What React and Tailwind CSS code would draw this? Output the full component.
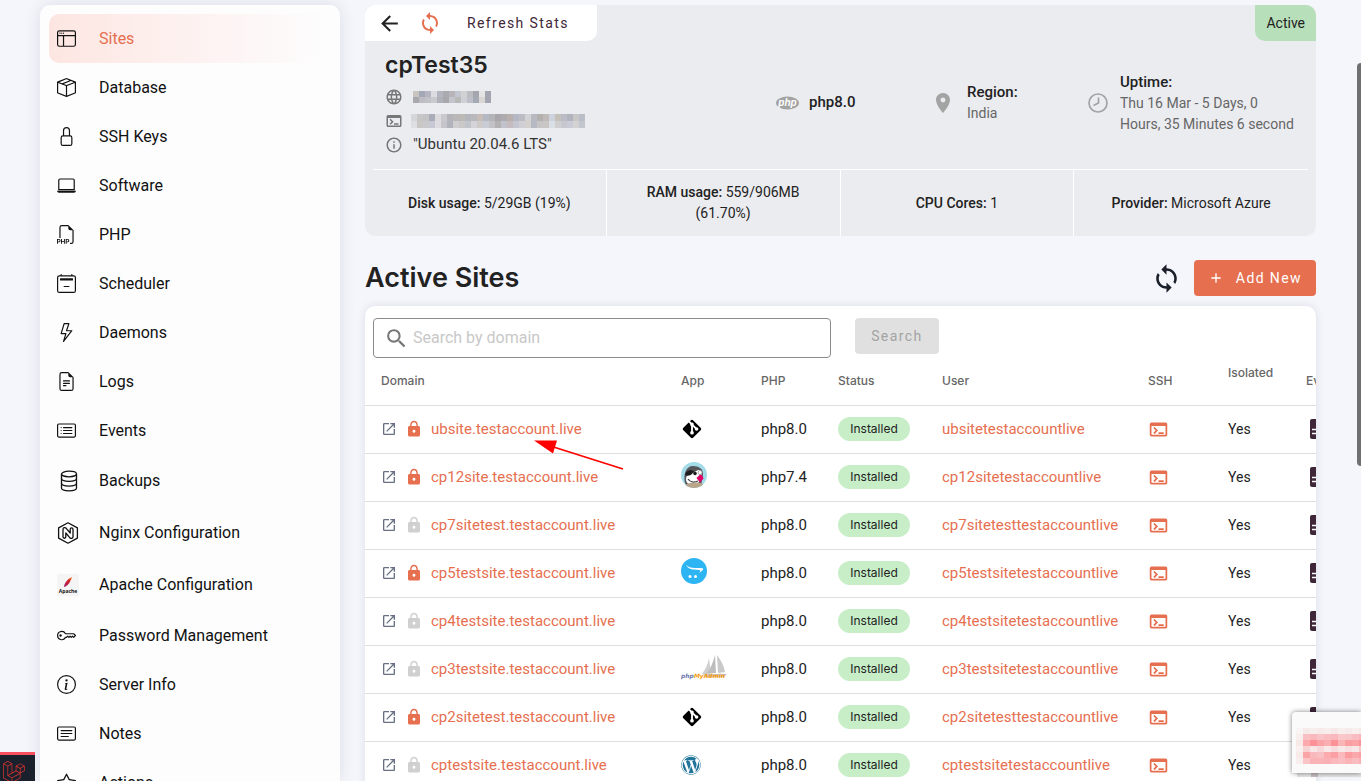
import React, { useState } from "react";
import {
  BsWindowSidebar,
  BsBoxSeam,
  BsLock,
  BsLaptop,
  BsFiletypePhp,
  BsCalendar2Minus,
  BsLightning,
  BsFileEarmarkText,
  BsCardList,
  BsKey,
  BsInfoCircle,
  BsCardText,
  BsStar,
} from "react-icons/bs";
import {
  MdArrowBack,
  MdSync,
  MdLanguage,
  MdOutlineTerminal,
  MdOutlineInfo,
  MdLocationOn,
  MdSearch,
  MdAdd,
  MdOpenInNew,
  MdLock,
} from "react-icons/md";
import { FaWordpress, FaLaravel } from "react-icons/fa";

const BackupIcon = () => (
  <svg width="22" height="22" viewBox="0 0 22 22" fill="none" stroke="currentColor" strokeWidth="1.3">
    <ellipse cx="12" cy="4" rx="7.5" ry="2.800" />
    <path d="M4.500 4v14c0 1.600 3.300 2.800 7.500 2.800s7.500-1.200 7.500-2.800V4" />
    <path d="M4.500 8.500c0 1.600 3.300 2.800 7.500 2.800s7.500-1.200 7.500-2.800M4.500 13.300c0 1.600 3.300 2.800 7.500 2.800s7.500-1.200 7.500-2.800" />
  </svg>
);

const NginxIcon = () => (
  <svg width="22" height="22" viewBox="0 0 22 22" fill="none" stroke="currentColor" strokeWidth="1.3" strokeLinejoin="round">
    <path d="M11 .8l9.400 5.100v10.200L11 21.200l-9.400-5.100V5.900z" />
    <path d="M6 14.800V7.300c0-1.700 2.100-2.200 3.200-1l4 4.700V7.200c0-1.900 2.800-1.900 2.800 0v7.500c0 1.700-2.100 2.200-3.200 1L8.800 11v3.800c0 1.900-2.800 1.900-2.800 0z" />
  </svg>
);

const ApacheIcon = () => (
  <svg width="22" height="22" viewBox="0 0 22 22">
    <defs>
      <linearGradient id="feather" x1="1" y1="0" x2="0" y2="1">
        <stop offset="0" stopColor="#f08a24" />
        <stop offset="0.4" stopColor="#d2232f" />
        <stop offset="1" stopColor="#9b1f6b" />
      </linearGradient>
    </defs>
    <rect width="22" height="22" fill="#f5f5f5" />
    <path d="M15 3c-4 1.500-7 5-8 9.500l.5.500c4-1.500 6-5.500 7.500-10z" fill="url(#feather)" />
    <text x="11" y="18.500" textAnchor="middle" fontSize="5" fontWeight="700" fontFamily="Open Sans, sans-serif" fill="#111">
      Apache
    </text>
  </svg>
);

const ClockIcon = () => (
  <svg width="20" height="20" viewBox="0 0 20 20" fill="none" stroke="currentColor" strokeWidth="1.700">
    <circle cx="10" cy="10" r="9" />
    <path d="M10.500 4.500V10l-5 2.500" />
  </svg>
);

const PhpIcon = () => (
  <svg width="26" height="14" viewBox="0 0 26 14">
    <ellipse cx="12.500" cy="7" rx="11.500" ry="6.500" fill="#a3a3a3" />
    <text x="12.500" y="9.500" textAnchor="middle" fontSize="10" fontStyle="italic" fontWeight="700" fontFamily="Liberation Sans, sans-serif" fill="#fff">
      php
    </text>
  </svg>
);

const EventsIcon = () => (
  <svg width="20" height="20" viewBox="0 0 20 20" className="max-w-none">
    <rect width="18" height="20" rx="2" fill="#3f2638" />
    <path d="M2 10.500h12M2 14.500h9" stroke="#fff" strokeWidth="1.500" />
  </svg>
);

const GitIcon = () => (
  <svg width="22" height="22" viewBox="0 0 24 24" fill="#000">
    <path d="M2.600 10.590L8.380 4.800l1.690 1.700c-.24.85.15 1.780.93 2.230v5.540c-.6.34-1 .99-1 1.730a2 2 0 0 0 2 2a2 2 0 0 0 2-2c0-.74-.4-1.390-1-1.730V9.410l2.070 2.090c-.07.15-.07.32-.07.5a2 2 0 0 0 2 2a2 2 0 0 0 2-2a2 2 0 0 0-2-2c-.18 0-.35 0-.5.07L13.930 7.500a1.980 1.980 0 0 0-1.150-2.340c-.43-.16-.88-.2-1.280-.09L9.800 3.380l.79-.78c.78-.79 2.040-.79 2.820 0l7.990 7.990c.79.78.79 2.040 0 2.820l-7.990 7.990c-.78.79-2.040.79-2.820 0L2.600 13.410c-.79-.78-.79-2.040 0-2.820Z" />
  </svg>
);

const PrestashopIcon = () => (
  <svg width="26" height="26" viewBox="0 0 26 26" className="mb-1">
    <defs>
      <clipPath id="presta">
        <circle cx="13" cy="13" r="13" />
      </clipPath>
    </defs>
    <g clipPath="url(#presta)">
      <rect width="26" height="26" fill="#a4dbe8" />
      <path d="M4 21C2 12 5 4 12 4c6 0 10 3 10 8l-2 12H6z" fill="#55555a" />
      <path d="M5 17c0-3 3-6 7-6l5-3c2-.5 4 .5 4 3l-3 9c-2 2-4 3-6 3-4 0-7-2-7-6z" fill="#fff" />
      <path d="M4 13c2 1 5 1 7-1l2-3-4-1-4 2z" fill="#1d1d20" />
      <circle cx="14" cy="11.500" r="1.800" fill="#1d1d20" />
      <circle cx="19" cy="10.500" r="2" fill="#fff" stroke="#888" strokeWidth=".7" />
      <path d="M15.500 16l3.500-3.500c2 .5 3 2 3.500 4l-3.500 4z" fill="#df0067" />
      <path d="M7 17c2 3 6 4 10 2" stroke="#444" strokeWidth="1.300" fill="none" />
      <path d="M4 23c5-3 13-3 18-1v4H4z" fill="#b9a58c" />
    </g>
  </svg>
);

const OpencartIcon = () => (
  <svg width="26" height="26" viewBox="0 0 26 26" className="mb-1">
    <circle cx="13" cy="13" r="13" fill="#2cb4f3" />
    <path d="M5 6.500c2 2.800 5 3.500 9 3.500 4.500 0 8.500-.2 8.200 1.200-.3 1-2.200 2.300-4.200 3.800 1-1.500 2-2.500.500-3C16.500 11.500 7 13 5 6.500z" fill="#fff" />
    <circle cx="9" cy="18.500" r="1.500" fill="#fff" />
    <circle cx="14.500" cy="18.500" r="1.500" fill="#fff" />
  </svg>
);

const PhpMyAdminIcon = () => (
  <svg width="46" height="26" viewBox="0 0 46 26" className="mb-1 overflow-visible">
    <path d="M21 20C25 15 27 9 28 4l2 16z" fill="#cfcfcf" />
    <path d="M26 19c4-5 6-11 8-18l1 18z" fill="#bdbdbd" />
    <path d="M36 1c4 5 7 11 8 17l-7 1z" fill="#c9c9c9" />
    <path d="M22 20h24l-3 3H25z" fill="#c4c4c4" />
    <text x="0" y="24" fontSize="6" fontStyle="italic" fontWeight="700" fontFamily="DejaVu Sans, sans-serif" fill="#6c78af">
      php<tspan fill="#f89c0e">MyAdmin</tspan>
    </text>
  </svg>
);

const apps = {
  git: <GitIcon />,
  prestashop: <PrestashopIcon />,
  opencart: <OpencartIcon />,
  phpmyadmin: <PhpMyAdminIcon />,
  wordpress: <FaWordpress size={20} className="text-[#21759b]" />,
};

const navItems = [
  { label: "Sites", icon: <BsWindowSidebar size={19} />, active: true },
  { label: "Database", icon: <BsBoxSeam size={19} /> },
  { label: "SSH Keys", icon: <BsLock size={19} /> },
  { label: "Software", icon: <BsLaptop size={19} /> },
  { label: "PHP", icon: <BsFiletypePhp size={19} /> },
  { label: "Scheduler", icon: <BsCalendar2Minus size={19} /> },
  { label: "Daemons", icon: <BsLightning size={19} /> },
  { label: "Logs", icon: <BsFileEarmarkText size={19} /> },
  { label: "Events", icon: <BsCardList size={19} /> },
  { label: "Backups", icon: <BackupIcon />, tall: true },
  { label: "Nginx Configuration", icon: <NginxIcon />, tall: true },
  { label: "Apache Configuration", icon: <ApacheIcon />, tall: true },
  { label: "Password Management", icon: <BsKey size={19} /> },
  { label: "Server Info", icon: <BsInfoCircle size={19} /> },
  { label: "Notes", icon: <BsCardText size={19} /> },
  { label: "Actions", icon: <BsStar size={19} /> },
];

const sites = [
  { domain: "ubsite.testaccount.live", ssl: true, app: "git", php: "php8.0", user: "ubsitetestaccountlive" },
  { domain: "cp12site.testaccount.live", ssl: true, app: "prestashop", php: "php7.4", user: "cp12sitetestaccountlive" },
  { domain: "cp7sitetest.testaccount.live", ssl: false, php: "php8.0", user: "cp7sitetesttestaccountlive" },
  { domain: "cp5testsite.testaccount.live", ssl: true, app: "opencart", php: "php8.0", user: "cp5testsitetestaccountlive" },
  { domain: "cp4testsite.testaccount.live", ssl: false, php: "php8.0", user: "cp4testsitetestaccountlive" },
  { domain: "cp3testsite.testaccount.live", ssl: false, app: "phpmyadmin", php: "php8.0", user: "cp3testsitetestaccountlive" },
  { domain: "cp2sitetest.testaccount.live", ssl: true, app: "git", php: "php8.0", user: "cp2sitetesttestaccountlive" },
  { domain: "cptestsite.testaccount.live", ssl: false, app: "wordpress", php: "php8.0", user: "cptestsitetestaccountlive" },
];

// Masked values, one colour per block
const ipMask = [
  "#c8c4c0 #a3a9b4 #b3b6c0 #dcdce0 #b3b6be #a9abb0 #b7b3b6 #c3c6d0 #d2d2d5 #bcbcc2 #a3a6ae #e4e4e4 #a3a6b0",
  "#a9a9ad #bcbcc2 #c0c2c8 #c9cad0 #b0b2ba #a8a8ac #c4c4cc #b9b9b9 #cfd0d6 #bcbec8 #a6aab4 #d9d6d4 #a3a6b0",
];
const hostMask = [
  "#d6d6d8 #c6c6c6 #c4c4c6 #a9adb8 #dcdadd #c9c9cc #b4b4b8 #b9b7b7 #bcb9b6 #b4b6bc #b9b9bd #c6bdb8 #b4b8c2 #b4b4b8 #a8a6aa #adabae #b9b0ae #b4b8c4 #bcbcc4 #d3d2d4 #b9b9c2 #b4b0ae #bfb9b9 #cdd2dc #c6c0bb #bcbcc6 #b1b4bc #c9c6c8 #b9bec8",
  "#dfdfe1 #c9c7c6 #c9c9cc #c6c9d4 #dedce0 #c4c4ca #b1b4bc #cfcfd2 #cac8c8 #c2c4cc #d4d4d8 #cfcaca #c9ccd4 #c2c2c6 #b4b1b4 #c0c2cc #c4bcbe #c4c6d0 #cfcfd4 #d4d0ce #b6b8c4 #c6c4c4 #cac6c6 #dadfe6 #cfcfd2 #c6c8d0 #c9ccd6 #d4d2d2 #c2c6ce",
];
const noticeMask = [
  "#f9f5f5 #f6eaea #f8eeee #f6eaea #f8eeee #f6e8e8 #f9eeee #f6eaea #f9efef #f6eaea",
  "#f9eeee #f9c0c4 #f9b9bd #f8c4c8 #f9bcc0 #f9b8bc #fac8ca #f8c6c8 #f9bcc0 #f8b4b8",
  "#f9e8e8 #fba9ad #fc9297 #fba4a8 #fbaeb2 #fc9297 #f9b4b8 #fb9ea2 #fba4a8 #fc9297",
  "#faf0f0 #f9d2d4 #f9e6e6 #f8d8da #f9e9e9 #f8dcde #f9e8e8 #f8e0e0 #f9e8e8 #f9c8ca",
  "#f9eaea #fba4a8 #f9b8bc #f9c0c4 #fbaaae #fa9fa4 #f9b9bd #fb9ca0 #fba8ac #fa9fa4",
  "#f9eeee #f9c4c6 #fab4b8 #fab4b8 #f9b0b4 #fab8bc #f9bcc0 #fab4b8 #f9bcc0 #fab0b4",
];
const footMask = ["#e4e4e5 #e6e6e7 #c6bcc2 #e2e2e4 #e4e4e6 #e2e2e4 #e4e4e6 #e2e2e4 #e4e4e6 #e2e2e4"];

const Mosaic = ({ rows, cell, cellHeight }) => {
  const parsed = rows.map((r) => r.split(" "));
  const h = cellHeight || cell;
  return (
    <svg width={parsed[0].length * cell} height={parsed.length * h} shapeRendering="crispEdges" className="max-w-none" aria-hidden="true">
      {parsed.map((colors, y) =>
        colors.map((fill, x) => (
          <rect key={`${x}-${y}`} x={x * cell} y={y * h} width={cell} height={h} fill={fill} />
        ))
      )}
    </svg>
  );
};

const Sidebar = () => (
  <nav className="w-[300px] shrink-0 rounded-t-[10px] bg-[#fdfdfe] px-[9px] pt-[9px] shadow-[0_0_16px_rgba(40,50,90,0.12)]">
    {navItems.map((item) => (
      <a
        key={item.label}
        href="#"
        className={`flex items-center rounded-[10px] pl-2 text-base ${item.tall ? "h-[52px]" : "h-[49px]"} ${
          item.active
            ? "bg-gradient-to-r from-[#fde6e2] to-transparent text-[#e66f50]"
            : "text-[#111]"
        }`}
      >
        <span className="flex w-[42px] shrink-0 text-[#111]">{item.icon}</span>
        {item.label}
      </a>
    ))}
  </nav>
);

const ServerCard = () => (
  <section className="overflow-hidden rounded-[10px] bg-[#ebecf0]">
    <div className="flex h-9 items-start justify-between">
      <div className="flex h-9 items-center rounded-br-[10px] bg-white pl-3 pr-7">
        <button aria-label="Back" className="text-[#222]">
          <MdArrowBack size={25} />
        </button>
        <button className="ml-4 flex items-center text-sm tracking-widest text-[#3f2638]">
          <MdSync size={24} className="mr-[25px] text-[#e66f50]" />
          Refresh Stats
        </button>
      </div>
      <span className="flex h-9 items-center rounded-bl-[10px] bg-[#b7dfb9] px-[11px] text-sm text-[#222]">Active</span>
    </div>

    <div className="flex h-32 items-center px-5 pb-1 text-sm">
      <div className="h-full flex-1 pt-2">
        <h1 className="font-[Inter,sans-serif] text-[23px] leading-8 font-semibold text-[#222]">cpTest35</h1>
        <ul className="mt-1 text-[#777]">
          <li className="flex h-6 items-center gap-2.5">
            <MdLanguage size={18} />
            <Mosaic rows={ipMask} cell={6} />
          </li>
          <li className="flex h-6 items-center gap-2">
            <MdOutlineTerminal size={18} />
            <Mosaic rows={hostMask} cell={6} cellHeight={7} />
          </li>
          <li className="flex h-6 items-center gap-2.5">
            <MdOutlineInfo size={18} />
            <span className="text-[15px] text-[#333]">"Ubuntu 20.04.6 LTS"</span>
          </li>
        </ul>
      </div>
      <div className="flex w-[156px] items-center gap-2 text-[15px] font-medium text-[#222]">
        <PhpIcon />
        php8.0
      </div>
      <div className="flex w-[157px] items-center gap-3 leading-[21px]">
        <MdLocationOn size={24} className="text-[#a3a3a3]" />
        <div>
          <div className="text-[15px] font-medium text-[#222]">Region:</div>
          <div className="text-[#666]">India</div>
        </div>
      </div>
      <div className="flex items-center gap-3 leading-[21px]">
        <span className="text-[#a3a3a3]">
          <ClockIcon />
        </span>
        <div>
          <div className="text-[15px] font-medium text-[#222]">Uptime:</div>
          <div className="w-[176px] text-[#666]">Thu 16 Mar - 5 Days, 0 Hours, 35 Minutes 6 second</div>
        </div>
      </div>
    </div>

    <div className="mx-2 grid h-[67px] grid-cols-4 divide-x divide-white border-t border-white text-center text-sm leading-[21px] text-[#222]">
      <div className="flex items-center justify-center px-5">
        <p><b className="font-medium">Disk usage:</b> 5/29GB (19%)</p>
      </div>
      <div className="flex items-center justify-center px-8">
        <p><b className="font-medium">RAM usage:</b> 559/906MB (61.70%)</p>
      </div>
      <div className="flex items-center justify-center px-5">
        <p><b className="font-medium">CPU Cores:</b> 1</p>
      </div>
      <div className="flex items-center justify-center px-5">
        <p><b className="font-medium">Provider:</b> Microsoft Azure</p>
      </div>
    </div>
  </section>
);

const SitesTable = () => (
  <table className="w-[1060px] table-fixed text-left text-[15px]">
    <colgroup>
      <col className="w-[300px]" />
      <col className="w-[80px]" />
      <col className="w-[77px]" />
      <col className="w-[104px]" />
      <col className="w-[206px]" />
      <col className="w-[80px]" />
      <col className="w-[80px]" />
      <col />
    </colgroup>
    <thead className="font-[Inter,sans-serif] text-xs text-[#666]">
      <tr className="h-[47px] border-b border-[#dedede]">
        <th className="pl-4 font-medium">Domain</th>
        <th className="pl-4 font-medium">App</th>
        <th className="pl-4 font-medium">PHP</th>
        <th className="pl-4 font-medium">Status</th>
        <th className="pl-4 font-medium">User</th>
        <th className="pl-4 font-medium">SSH</th>
        <th className="pb-4 pl-4 font-medium">Isolated</th>
        <th className="pl-[14px] font-medium">Events</th>
      </tr>
    </thead>
    <tbody>
      {sites.map((site) => (
        <tr key={site.domain} className="h-12 border-b border-[#dedede] text-[#222]">
          <td className="pl-4">
            <div className="flex items-center">
              <a href="#" aria-label={`Open ${site.domain}`} className="text-[#667080]">
                <MdOpenInNew size={16} />
              </a>
              <MdLock size={18} className={site.ssl ? "ml-2 text-[#e66f50]" : "ml-2 text-[#d0d0d0]"} />
              <a href="#" className="ml-2 text-[#e66f50]">{site.domain}</a>
            </div>
          </td>
          <td className="pl-4">{apps[site.app]}</td>
          <td className="pl-4">{site.php}</td>
          <td className="pl-4">
            <span className="flex h-6 w-[72px] items-center justify-center rounded-full bg-[#c8eec8] font-[Inter,sans-serif] text-xs">
              Installed
            </span>
          </td>
          <td className="pl-4">
            <a href="#" className="text-[#e66f50]">{site.user}</a>
          </td>
          <td className="pl-4">
            <button aria-label="Open terminal" className="flex text-[#e66f50]">
              <MdOutlineTerminal size={21} />
            </button>
          </td>
          <td className="pl-4 text-sm">Yes</td>
          <td className="pl-[18px]">
            <button aria-label="Events" className="flex">
              <EventsIcon />
            </button>
          </td>
        </tr>
      ))}
    </tbody>
  </table>
);

const App = () => {
  const [query, setQuery] = useState("");

  return (
    <div className="relative h-screen overflow-hidden bg-[#f5f6fb] font-[Roboto,sans-serif]">
      <div className="flex h-full gap-[25px] pt-[5px] pr-[45px] pl-10">
        <Sidebar />

        <main className="min-w-0 flex-1">
          <ServerCard />

          <div className="mt-6 mb-2.5 flex h-9 items-center justify-between">
            <h2 className="font-[Inter,sans-serif] text-[27px] font-semibold text-[#222]">Active Sites</h2>
            <div className="flex items-center gap-3">
              <button aria-label="Reload sites" className="text-[#1b1f2a]">
                <MdSync size={31} />
              </button>
              <button className="flex h-9 items-center gap-3 rounded bg-[#e66f50] px-3.5 text-sm tracking-widest text-white">
                <MdAdd size={16} />
                Add New
              </button>
            </div>
          </div>

          <section className="overflow-hidden rounded-t-[10px] bg-white pt-3 shadow-[0_0_8px_rgba(40,50,90,0.12)]">
            <form className="flex items-start gap-6 px-2" onSubmit={(e) => e.preventDefault()}>
              <label className="flex h-10 w-[49%] items-center gap-1 rounded border border-[#8c8c8c] pl-2.5">
                <MdSearch size={25} className="text-[#777]" />
                <input
                  type="text"
                  value={query}
                  onChange={(e) => setQuery(e.target.value)}
                  placeholder="Search by domain"
                  aria-label="Search by domain"
                  className="flex-1 text-base outline-none placeholder:text-[#c8c8c8]"
                />
              </label>
              <button disabled={!query} className="h-9 rounded bg-[#e0e0e0] px-4 text-sm tracking-widest text-[#a3a3a3]">
                Search
              </button>
            </form>
            <SitesTable />
          </section>
        </main>
      </div>

      {/* Pointer to the first site */}
      <svg className="absolute top-[436px] left-[530px]" width="100" height="40" viewBox="0 0 100 40">
        <path d="M22 10.500l71 22.500" stroke="#f00" strokeWidth="1.800" />
        <path d="M4 4.500h23l-4 13z" fill="#f00" />
      </svg>

      {/* Debugbar toggle */}
      <button
        aria-label="Open debugbar"
        className="absolute bottom-0 left-0 flex h-[29px] w-[35px] items-start border-t-[3px] border-[#f9505f] bg-[#1a212d] pt-1.5 pl-[3px] text-[#e3342f]"
      >
        <FaLaravel size={22} className="shrink-0" />
      </button>

      {/* Notice */}
      <div className="absolute right-0 bottom-1 w-16 overflow-hidden">
        <Mosaic rows={footMask} cell={7} />
      </div>
      <div className="absolute right-0 bottom-2 h-[61px] w-[69px] overflow-hidden rounded-tl bg-[#fafafa] pt-4 pl-1 shadow-[0_0_5px_rgba(0,0,0,0.5)]">
        <Mosaic rows={noticeMask} cell={7} cellHeight={6} />
      </div>

      {/* Scroll thumb */}
      <div className="absolute top-[63px] right-0 h-[403px] w-1 rounded-l bg-[#707070]" />
    </div>
  );
};

export default App;
